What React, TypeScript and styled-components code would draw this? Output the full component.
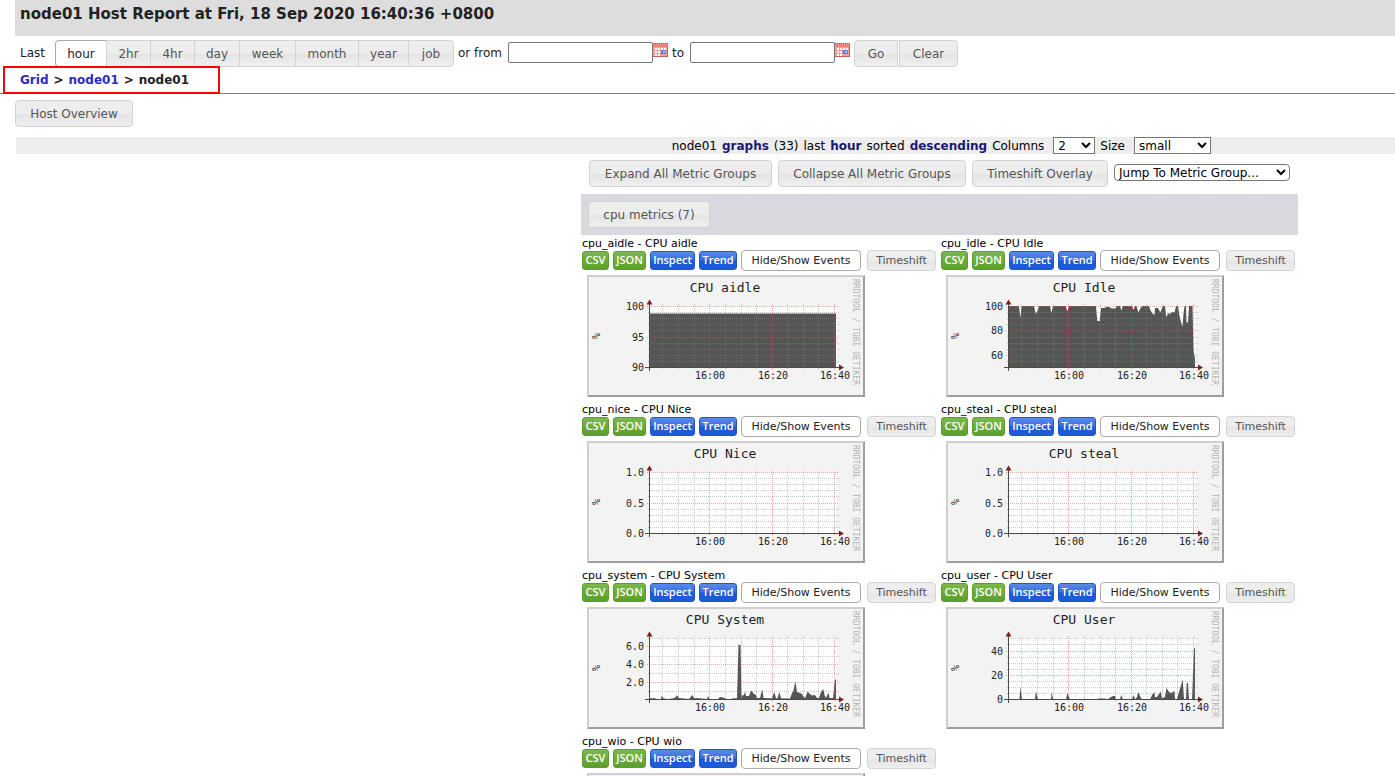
import React from 'react';
import styled, { createGlobalStyle, css } from 'styled-components';

const GlobalStyle = createGlobalStyle`
  * { box-sizing: border-box; }
  html, body { margin: 0; background: #fff; }
  body {
    font-family: Verdana, "DejaVu Sans", sans-serif;
    font-size: 12px;
    line-height: 16px;
    color: #000;
  }
`;

const Page = styled.main`
  height: 100vh;
  overflow: hidden;
`;

const TitleBar = styled.header`
  height: 36px;
  margin-left: 15px;
  padding: 4px 5px;
  background: #ddd;
`;

const Title = styled.h1`
  margin: 0;
  font-size: 15px;
  line-height: 20px;
  font-weight: bold;
  color: #222;
`;

const RangeForm = styled.form`
  display: flex;
  align-items: flex-start;
  height: 27px;
  margin-top: 4px;
  padding-left: 20px;
  color: #222;
  white-space: nowrap;
`;

const rangeText = css<{ $w: number }>`
  flex: none;
  width: ${(p) => p.$w}px;
  line-height: 26px;
`;

const RangeText = styled.span<{ $w: number }>`
  ${rangeText}
`;

const RangeLabel = styled.label<{ $w: number }>`
  ${rangeText}
  padding-left: 4px;
`;

const uiButton = css`
  display: inline-flex;
  align-items: center;
  justify-content: center;
  height: 27px;
  padding: 0;
  border: 1px solid #d3d3d3;
  background: linear-gradient(#eee 0, #ededed 50%, #e4e4e4 52%, #efefef 100%);
  color: #555;
  font-family: inherit;
  font-size: 12px;
  white-space: nowrap;
`;

const UiButton = styled.button<{ $w: number }>`
  ${uiButton}
  flex: none;
  width: ${(p) => p.$w}px;
  border-radius: 4px;
`;

const Segments = styled.div`
  display: flex;
  flex: none;
`;

const Segment = styled.button<{ $w: number; $active?: boolean }>`
  ${uiButton}
  flex: none;
  width: ${(p) => p.$w}px;
  border-right-width: 0;
  &:first-child { border-radius: 4px 0 0 4px; }
  &:last-child { border-right-width: 1px; border-radius: 0 4px 4px 0; }
  ${(p) => p.$active && css`
    border-color: #aaa;
    background: #fff;
    color: #212121;
  `}
`;

const ActionSegments = styled(Segments)`
  gap: 1px;
  margin-left: 4px;
  ${Segment} { border-right-width: 1px; }
`;

const DateInput = styled.input`
  flex: none;
  width: 145px;
  height: 21px;
  margin-top: 2px;
  border: 1px solid #767676;
  border-radius: 2px;
  background: #fff;
  font: inherit;
`;

const CalendarButton = styled.button`
  flex: none;
  width: 15px;
  height: 15px;
  margin-top: 3px;
  padding: 0;
  border: 0;
  background: none;
  svg { display: block; }
`;

const Breadcrumb = styled.nav`
  position: relative;
  display: flex;
  gap: 5px;
  height: 27px;
  padding: 5px 0 0 20px;
  border-bottom: 1px solid #808080;
  font-weight: bold;
  color: #222;
  line-height: 17px;
`;

const Crumb = styled.a`
  color: #2c2cc4;
  text-decoration: none;
`;

const Highlight = styled.div`
  position: absolute;
  left: 3px;
  top: -1px;
  width: 217px;
  height: 28px;
  border: 2px solid #f00;
  pointer-events: none;
`;

const OverviewBar = styled.div`
  display: flex;
  padding: 6px 0 10px 15px;
`;

const SortBar = styled.div`
  display: flex;
  justify-content: flex-end;
  align-items: center;
  gap: 5px;
  height: 17px;
  margin-left: 16px;
  padding-right: 184px;
  background: #ededed;
  white-space: nowrap;
  b { color: #191970; }
`;

const Select = styled.select<{ $w: number; $round?: boolean }>`
  flex: none;
  width: ${(p) => p.$w}px;
  height: 17px;
  margin-left: 4px;
  padding: 0;
  border: 1px solid #767676;
  border-radius: ${(p) => (p.$round ? 4 : 0)}px;
  background: #fff;
  color: #000;
  font-family: inherit;
  font-size: 12px;
`;

const JumpSelect = styled(Select)`
  margin: 4px 0 0;
`;

const Metrics = styled.section`
  width: 717px;
  margin: 6px 97px 0 auto;
`;

const Tools = styled.div`
  display: flex;
  align-items: flex-start;
  gap: 6px;
  padding: 0 8px;
`;

const GroupBar = styled.h2`
  display: flex;
  height: 41px;
  margin: 7px 0 1px;
  padding: 7px;
  background: #d8d9df;
  font-weight: normal;
`;

const Cards = styled.div`
  display: grid;
  grid-template-columns: 358px 357px;
  gap: 1px;
  padding-left: 1px;
`;

const Card = styled.article`
  height: 165px;
  font-size: 11px;
  white-space: nowrap;
`;

const CardTitle = styled.h3`
  margin: 0;
  padding-top: 2px;
  font-size: 11px;
  line-height: 12px;
  font-weight: normal;
`;

const CardActions = styled.div`
  display: flex;
  align-items: center;
  gap: 4px;
  height: 21px;
`;

const MiniButton = styled.button<{ $w: number; $tone: 'green' | 'blue' }>`
  flex: none;
  width: ${(p) => p.$w}px;
  height: 19px;
  padding: 0 0 2px;
  border: 1px solid ${(p) => (p.$tone === 'green' ? '#5d9c2f' : '#2255c0')};
  border-radius: 3px;
  background: ${(p) =>
    p.$tone === 'green'
      ? 'linear-gradient(#7cb84c, #5c9f2c)'
      : 'linear-gradient(#5b8ae8 0, #3a70e0 45%, #1c5ad8 55%, #1c5ad8 100%)'};
  color: #fff;
  font-family: "Open Sans", sans-serif;
  font-size: 11px;
  font-weight: 600;
  line-height: 14px;
  text-align: center;
`;

const EventToggle = styled.button`
  ${uiButton}
  flex: none;
  width: 120px;
  height: 21px;
  margin-right: 2px;
  border-color: #aaa;
  border-radius: 4px;
  background: #fff;
  color: #212121;
  font-size: 11px;
`;

const ShiftButton = styled(UiButton)`
  height: 21px;
  font-size: 11px;
`;

const ChartSvg = styled.svg`
  display: block;
  margin: 4px 0 0 5px;
  text {
    font-family: "DejaVu Sans Mono", monospace;
    font-size: 10px;
    fill: #222;
  }
  .title { font-size: 13px; }
  .unit { font-size: 10px; }
  .credit { font-size: 8px; fill: #b4b4b4; }
`;

type Tick = { y: number; label: string };
type Metric = {
  id: string;
  title: string;
  ticks: Tick[];
  minor: number[];
  area?: string;
};

const fine = [37, 43, 49, 55, 68, 74, 80, 86];

const metrics: Metric[] = [
  {
    id: 'cpu_aidle',
    title: 'CPU aidle',
    ticks: [{ y: 31, label: '100' }, { y: 62, label: '95' }, { y: 92, label: '90' }],
    minor: fine,
    area: '62,92 62,38.5 249,38.5 249,92',
  },
  {
    id: 'cpu_idle',
    title: 'CPU Idle',
    ticks: [{ y: 31, label: '100' }, { y: 55, label: '80' }, { y: 80, label: '60' }],
    minor: [37, 43, 49, 62, 68, 74, 86],
    area:
      '62,92 62,31 73,31 74.3,43 75.5,31 88,31 89.7,38.7 91.5,36 93,31 104,31 105.3,38 107,31 119.7,31 121.3,36.5 123,31 150,31 151.3,46 153.7,46 155,33 158,33 162,31.5 166,33.5 169.5,33.5 171,31 174,31 175.3,35.5 177,31 186,31 187.7,35 189,31 190.5,31 192.3,37.5 194,34 196,31 203,31 204,34 206,38 208.5,40 209,33 212,33 214.3,37.5 216,33 217,31 219,31 220.3,42.5 222,38 224,39 226,37 228.5,37.5 230,31 232,31 233.5,41 236.3,52 238,34 239,31 240,31 240.5,47.5 242,47.5 243,31 246.5,31 247.5,75 249,84 249,92',
  },
  {
    id: 'cpu_nice',
    title: 'CPU Nice',
    ticks: [{ y: 31, label: '1.0' }, { y: 62, label: '0.5' }, { y: 92, label: '0.0' }],
    minor: fine,
  },
  {
    id: 'cpu_steal',
    title: 'CPU steal',
    ticks: [{ y: 31, label: '1.0' }, { y: 62, label: '0.5' }, { y: 92, label: '0.0' }],
    minor: fine,
  },
  {
    id: 'cpu_system',
    title: 'CPU System',
    ticks: [{ y: 39, label: '6.0' }, { y: 57, label: '4.0' }, { y: 75, label: '2.0' }],
    minor: [31, 49, 66, 84],
    area:
      '62,92.5 63,91.3 68,91.3 70,92 74,92 74.7,88.5 76,91 80,92 86,91.5 89,90 89.7,88 92,91 102,92 105.3,88 107,91 113,91.3 120,92 121,89 122.5,92 131,92 133,90 136,90.5 140,92 144,92 146,91.3 150,91.3 151.5,37.5 153.5,38 154.5,91 155,88.5 157,88 158,84.5 159,89 162,89 164,83.5 167,87 169,88 170,91 173,91 175.3,82 176.5,91 185,91.3 187.3,85 189,91.3 190.5,91.3 192.3,85 194,91.3 203,91.5 205,86 206.5,84 208.3,74 210,85 213,86 215,87 216,89 218,91 219,89 220.5,84.5 223,87 225,88.5 228,88 230,91 232,91 234,85 236.3,82 237.5,88 239,91 241.3,85.5 242.5,91 246,91 248,72.5 249,72.5 249,92.5',
  },
  {
    id: 'cpu_user',
    title: 'CPU User',
    ticks: [{ y: 44, label: '40' }, { y: 68, label: '20' }, { y: 92, label: '0' }],
    minor: [31, 37, 50, 56, 62, 74, 80, 86],
    area:
      '62,92.5 73.5,92.5 74.3,80 75.7,90 76,92.5 89,92.5 89.8,84 92,92.5 105,92.5 105.6,84.5 107,92.5 120,92.5 121.3,86 123,90 124,92.5 150,92.5 153,91.5 157.5,91.5 162,92 165,90 167,89 169,89 170,92 174,92 175.3,88 177,92.5 186,92 187.7,88 189,92.5 191,90 192.3,85 194,89 196,92.5 204,92.5 206,88 208.3,85 209,90 211,90 213,87 214.5,84.5 216,91 219,90 220.5,81 223,85 225,86 228.5,84 229,92 231,92 233,85 236.7,72.5 238,92 240,92 240.7,76 242,76 243,92.5 246,92.5 248,41.5 249,41 249,92.5',
  },
  {
    id: 'cpu_wio',
    title: 'CPU wio',
    ticks: [{ y: 31, label: '1.0' }, { y: 62, label: '0.5' }, { y: 92, label: '0.0' }],
    minor: fine,
  },
];

const minorX = [75, 91, 107, 138, 154, 169, 200, 216, 231];
const majorX = [122, 185, 247];
const hours = ['16:00', '16:20', '16:40'];

function Chart({ metric }: { metric: Metric }) {
  return (
    <ChartSvg width="278" height="122" viewBox="0 0 278 122" role="img" aria-label={metric.title}>
      <rect width="278" height="122" fill="#f3f3f3" />
      <path d="M0 122V0H278L276 2H2V120Z" fill="#cfcfcf" />
      <path d="M278 0V122H0L2 120H276V2Z" fill="#9e9e9e" />
      <rect x="62" y="31" width="188" height="61" fill="#fff" />
      {metric.area && <polygon points={metric.area} fill="#555" />}
      <g strokeDasharray="1 1" strokeWidth="1" fill="none">
        <g stroke="#8f8f8f" strokeOpacity="0.45">
          {metric.minor.map((y) => <path key={y} d={`M61 ${y + 0.5}H252`} />)}
          {minorX.map((x) => <path key={x} d={`M${x + 0.5} 29V94`} />)}
        </g>
        <g stroke="#e85050" strokeOpacity="0.5">
          {metric.ticks.map((t) => <path key={t.y} d={`M60 ${t.y + 0.5}H252`} />)}
          {majorX.map((x) => <path key={x} d={`M${x + 0.5} 29V95`} />)}
        </g>
      </g>
      <path d="M62.5 96V29M58 92.5H253" stroke="#4a4a4a" strokeWidth="1" />
      <path d="M59.5 29.5L62.5 24.5L65.5 29.5ZM252 89.5L257 92.5L252 95.5Z" fill="#7f1f1f" />
      <text className="title" x="138" y="17" textAnchor="middle">{metric.title}</text>
      {metric.ticks.map((t) => (
        <text key={t.label} x="57" y={t.y + 4} textAnchor="end">{t.label}</text>
      ))}
      {hours.map((h, i) => (
        <text key={h} x={majorX[i] + 1} y="104" textAnchor="middle">{h}</text>
      ))}
      <text className="unit" transform="translate(13 64) rotate(-90)">%</text>
      <text className="credit" transform="translate(266 4) rotate(90)">RRDTOOL / TOBI OETIKER</text>
    </ChartSvg>
  );
}

function MetricCard({ metric }: { metric: Metric }) {
  return (
    <Card>
      <CardTitle>{metric.id} - {metric.title}</CardTitle>
      <CardActions>
        <MiniButton $w={27} $tone="green">CSV</MiniButton>
        <MiniButton $w={33} $tone="green">JSON</MiniButton>
        <MiniButton $w={45} $tone="blue">Inspect</MiniButton>
        <MiniButton $w={38} $tone="blue">Trend</MiniButton>
        <EventToggle>Hide/Show Events</EventToggle>
        <ShiftButton $w={69}>Timeshift</ShiftButton>
      </CardActions>
      <Chart metric={metric} />
    </Card>
  );
}

function CalendarIcon() {
  return (
    <svg width="15" height="15" viewBox="0 0 15 15">
      <rect width="15" height="14" fill="#f0a09b" />
      <rect y="1" width="15" height="3" fill="#ea857f" />
      <path d="M0 .5H15" stroke="#8c5a5a" strokeDasharray="1 1" />
      <path d="M2 5h2v2H2zM5 5h2v2H5zM8 5h2v2H8zM11 5h2v2h-2zM2 8h2v2H2zM5 8h2v2H5zM2 11h2v2H2zM5 11h2v2H5z" fill="#fff" />
      <rect x="8" y="7" width="5" height="4" fill="#5a7fd6" />
      <rect x="10" y="8" width="2" height="2" fill="#a9c0f4" />
      <path d="M0 13.5H15M14.5 3V14" stroke="#c06060" />
    </svg>
  );
}

const ranges: [string, number][] = [
  ['hour', 51], ['2hr', 44], ['4hr', 44], ['day', 45], ['week', 56], ['month', 63], ['year', 50], ['job', 46],
];

export default function App() {
  return (
    <Page>
      <GlobalStyle />
      <TitleBar>
        <Title>node01 Host Report at Fri, 18 Sep 2020 16:40:36 +0800</Title>
      </TitleBar>
      <RangeForm onSubmit={(e) => e.preventDefault()}>
        <RangeText $w={35}>Last</RangeText>
        <Segments>
          {ranges.map(([label, w], i) => (
            <Segment key={label} type="button" $w={w} $active={i === 0}>{label}</Segment>
          ))}
        </Segments>
        <RangeLabel $w={54} htmlFor="from">or from</RangeLabel>
        <DateInput id="from" />
        <CalendarButton type="button" aria-label="Pick start"><CalendarIcon /></CalendarButton>
        <RangeLabel $w={22} htmlFor="to">to</RangeLabel>
        <DateInput id="to" />
        <CalendarButton type="button" aria-label="Pick end"><CalendarIcon /></CalendarButton>
        <ActionSegments>
          <Segment type="submit" $w={44}>Go</Segment>
          <Segment type="button" $w={59}>Clear</Segment>
        </ActionSegments>
      </RangeForm>
      <Breadcrumb>
        <Crumb href="#grid">Grid</Crumb>
        <span>&gt;</span>
        <Crumb href="#node01">node01</Crumb>
        <span>&gt;</span>
        <span>node01</span>
        <Highlight />
      </Breadcrumb>
      <OverviewBar>
        <UiButton $w={118}>Host Overview</UiButton>
      </OverviewBar>
      <SortBar>
        <span>node01</span>
        <b>graphs</b>
        <span>(33)</span>
        <span>last</span>
        <b>hour</b>
        <span>sorted</span>
        <b>descending</b>
        <label htmlFor="columns">Columns</label>
        <Select id="columns" $w={42} defaultValue="2"><option>2</option></Select>
        <label htmlFor="size">Size</label>
        <Select id="size" $w={77} defaultValue="small"><option>small</option></Select>
      </SortBar>
      <Metrics>
        <Tools>
          <UiButton $w={183}>Expand All Metric Groups</UiButton>
          <UiButton $w={188}>Collapse All Metric Groups</UiButton>
          <UiButton $w={136}>Timeshift Overlay</UiButton>
          <JumpSelect $w={176} $round aria-label="Jump to metric group" defaultValue="Jump To Metric Group...">
            <option>Jump To Metric Group...</option>
          </JumpSelect>
        </Tools>
        <GroupBar>
          <UiButton $w={122}>cpu metrics (7)</UiButton>
        </GroupBar>
        <Cards>
          {metrics.map((m) => <MetricCard key={m.id} metric={m} />)}
        </Cards>
      </Metrics>
    </Page>
  );
}
